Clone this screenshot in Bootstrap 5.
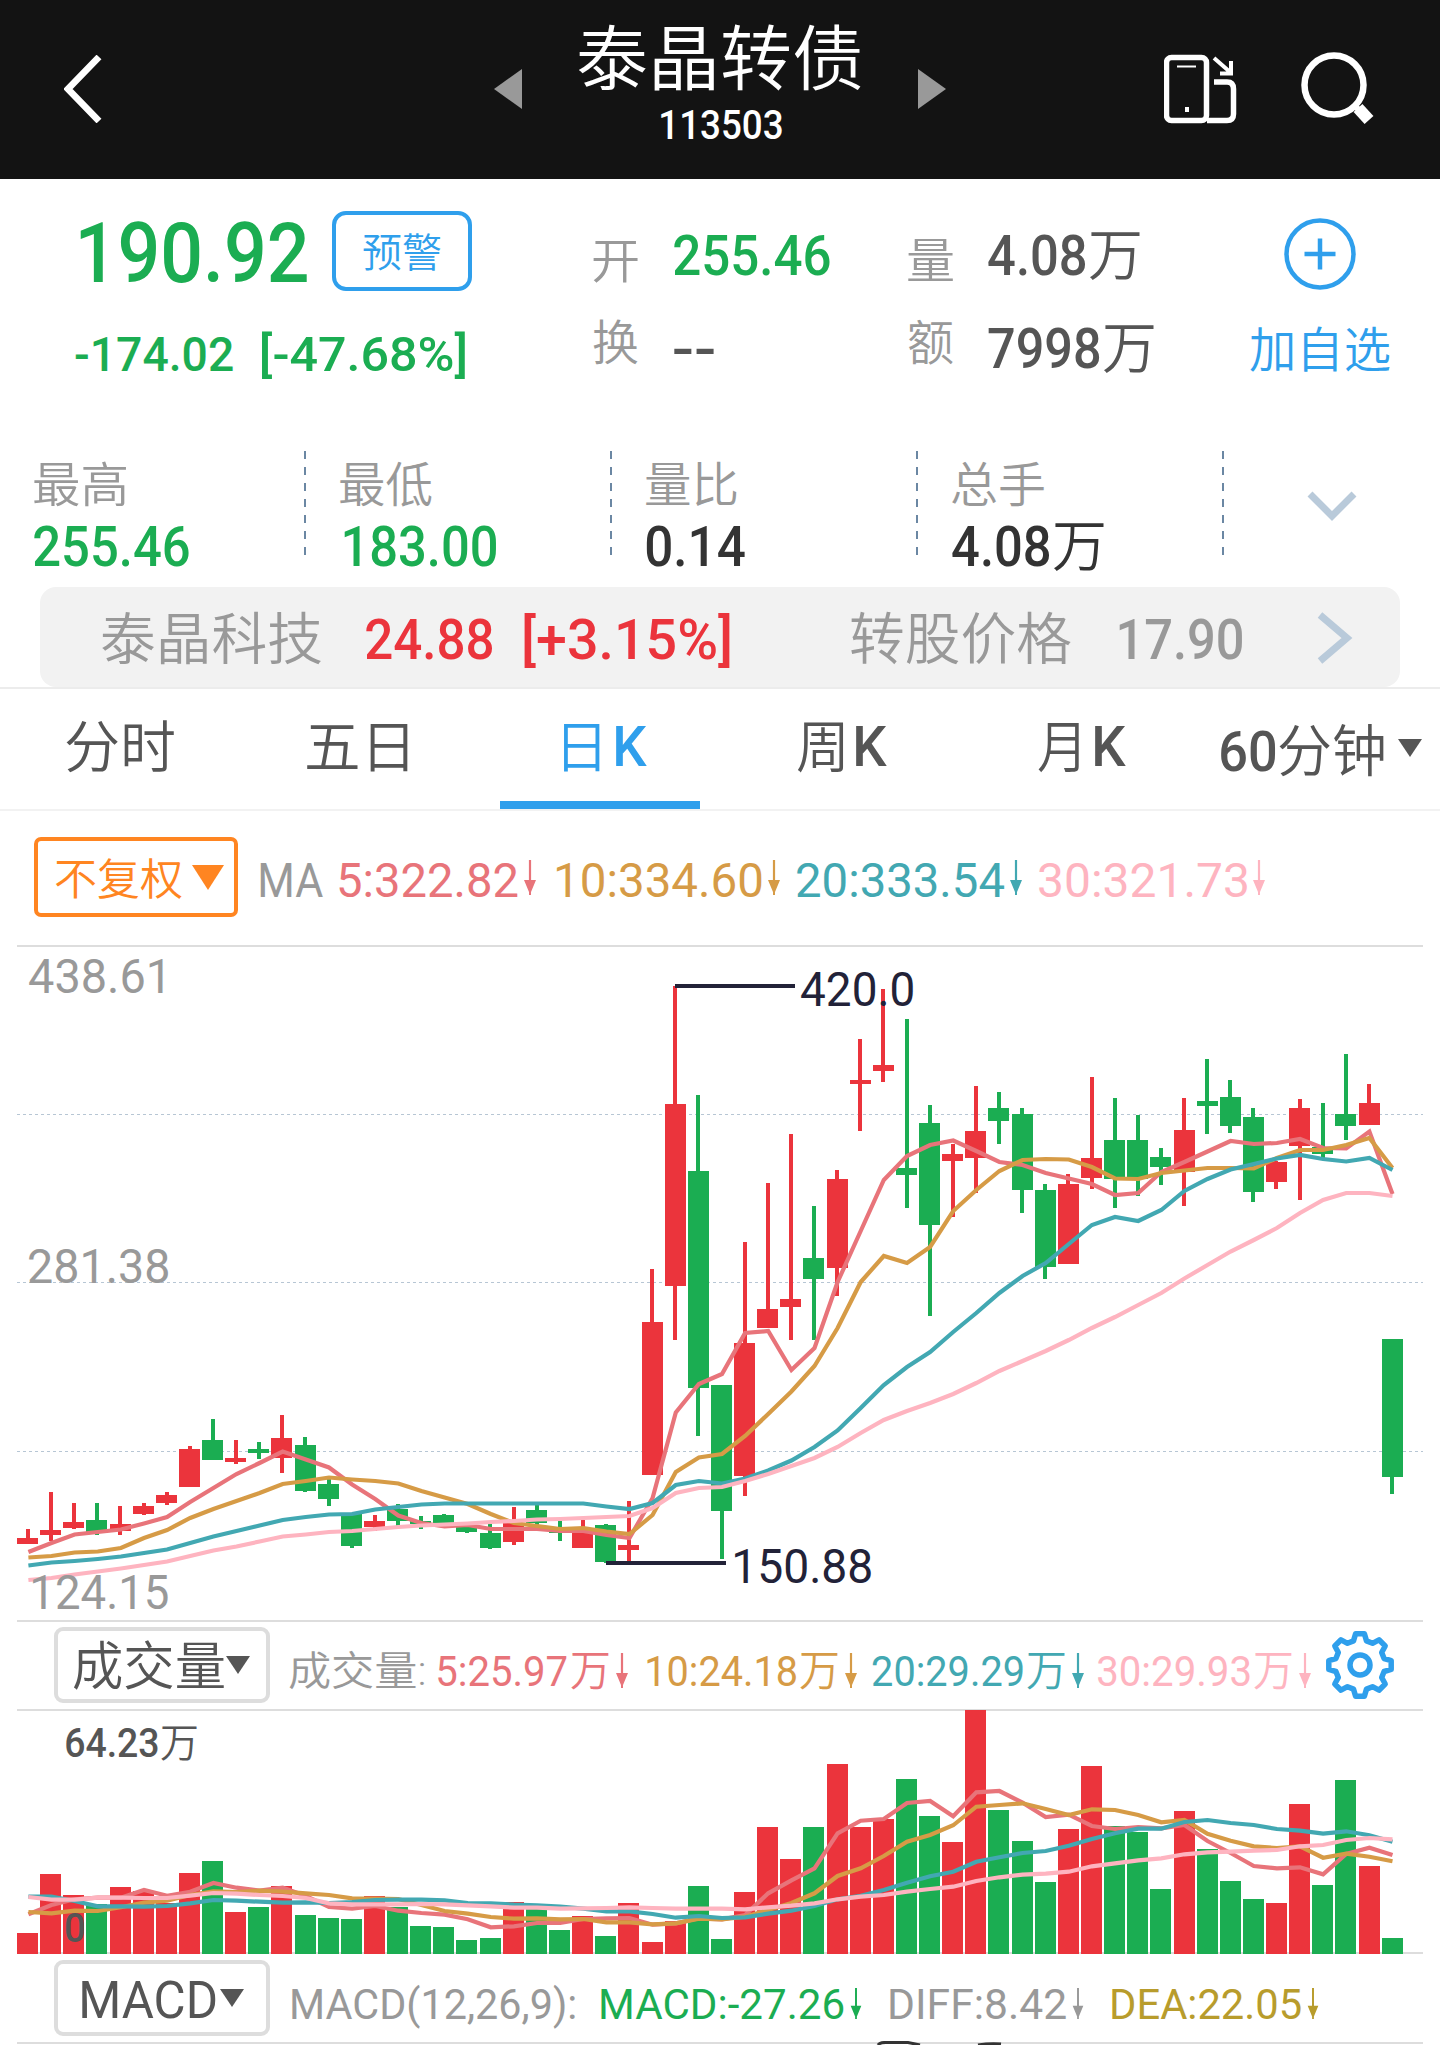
<!DOCTYPE html>
<html lang="zh-CN">
<head>
<meta charset="utf-8">
<meta name="viewport" content="width=device-width, initial-scale=1">
<title>泰晶转债 113503</title>
<link href="https://cdn.jsdelivr.net/npm/bootstrap@5.3.0/dist/css/bootstrap.min.css" rel="stylesheet">
<style>
  :root { --up:#eb343c; --down:#1bad52; --blue:#2f9fec; --orange:#ff8521; --c5:#e8747a; --c10:#d69b46; --c20:#42a8b2; --c30:#feb4c0; --ink:#555; --soft:#999; }
  body { font-family: Roboto, "Noto Sans CJK SC", sans-serif; font-weight: 500; color: var(--ink); background: #fff; overflow: hidden; }
  .screen { width: 1440px; height: 2045px; overflow: hidden; }
  .fit { display: block; white-space: nowrap; flex: none; }
  .fit > span { display: inline-block; transform-origin: 0 50%; }
  .zh { font-weight: 350; }
  svg { display: block; flex: none; }
  .up { color: var(--up); } .down { color: var(--down); } .soft { color: var(--soft); } .blue { color: var(--blue); } .dark { color: #333; }
  .c5 { color: var(--c5); } .c10 { color: var(--c10); } .c20 { color: var(--c20); } .c30 { color: var(--c30); } .dea { color: #b89c2c; }
  .f84 { font-size: 84px; line-height: 84px; } .f72 { font-size: 71px; line-height: 76px; }
  .f56 { font-size: 56px; line-height: 60px; } .f52 { font-size: 52px; line-height: 60px; }
  .f48 { font-size: 48px; line-height: 50px; } .f43 { font-size: 43px; line-height: 50px; } .f40 { font-size: 40px; line-height: 44px; }

  .topbar { height: 179px; background: #131313; color: #fff; display: grid; grid-template-columns: 430px 84px 340px 246px 136px 74px; padding-left: 64px; align-items: center; }
  .topbar > svg { margin-top: -1px; }
  .topbar .name { height: 179px; padding-top: 22px; }
  .topbar .code-no { margin: 6px 0 0 83px; }

  .quote { height: 272px; display: grid; grid-template-columns: 518px 81px 234px 80px 262px 140px; padding-left: 75px; }
  .price { padding: 30px 0 0 5px; } .price > .fit { padding-top: 3px; } .change { gap: 29px; margin-top: 34px; }
  .alert-btn { width: 140px; height: 80px; margin: -4px 0 0 25px; border: 4px solid var(--blue); border-radius: 14px; }
  .alert-btn .fit { margin-top: 7px; }
  .lab { padding-top: 58px; } .lab > :last-child { margin-top: 32px; }
  .val { padding-top: 47px; } .val > :last-child { margin-top: 33px; }
  .add { padding-top: 39px; } .add svg { margin-left: 34px; } .add .fit { margin-top: 36px; }

  .stats { height: 136px; display: grid; grid-template-columns: repeat(4, 306px) 1fr; padding-left: 34px; }
  .stat { height: 104px; margin-right: 34px; background: repeating-linear-gradient(#6b87a3 0 8px, transparent 8px 16px) right top / 2px 104px no-repeat; padding-top: 10px; }
  .stat > :last-child { margin-top: 6px; }
  .linked { width: 1360px; height: 100px; margin-left: 40px; padding: 5px 0 0 62px; background: #f2f2f2; border-radius: 16px; display: grid; grid-template-columns: 264px 158px 327px 268px 198px 36px; align-items: center; }
  .linked svg { margin-top: -4px; }
  .linked .zh { margin-top: 1px; }

  .periods { height: 124px; border-top: 2px solid #ececec; border-bottom: 2px solid #f2f2f2; display: grid; grid-template-columns: 241px 193px 297px 241px 183px 177px 30px; padding-left: 66px; }
  .periods .nav-link { padding: 0; height: 120px; color: #555; }
  .periods .fit { margin-top: 28px; } .periods .zh { margin-top: 29px; } .periods .nav-link.now { width: 200px; border-bottom: 8px solid var(--blue); padding-left: 64px; color: var(--blue); }
  .periods .later { margin-top: 33px; } .periods svg { margin-top: 50px; }

  .legend-ma { height: 134px; display: grid; grid-template-columns: 226px 79px 218px 240px 242px 230px; padding-left: 34px; align-items: center; font-weight: 450; }
  .legend-ma > .fit, .legend-ma .arrowed .fit { margin-top: 5px; }
  .adj { width: 204px; height: 80px; margin-bottom: 2px; border: 4px solid var(--orange); border-radius: 7px; color: var(--orange); padding-left: 17px; gap: 10px; }
  .adj .fit { margin-top: 6px; }
  .arrowed { gap: 6px; }
  .picker, .picker:hover { width: 216px; height: 76px; border: 4px solid #ddd; border-radius: 9px; padding-left: 15px; gap: 2px; color: #555; }
  .picker .fit { margin-top: 6px; }
  .picker.macd { padding-left: 24px; gap: 4px; }
  .legend-vol { height: 87px; display: grid; grid-template-columns: 235px 149px 209px 225px 226px 227px 70px; padding-left: 54px; align-items: center; font-weight: 450; }
  .legend-vol .picker { margin-top: -1px; } .legend-vol .arrowed { gap: 7px; padding-top: 10px; } .legend-vol > .fit { padding-top: 13px; }
  #gear { margin-top: -2px; }
  .legend-macd { height: 88px; display: grid; grid-template-columns: 238px 309px 289px 222px 210px; padding-left: 54px; align-items: start; font-weight: 450; }
  .legend-macd .picker { margin-top: 3px; } .legend-macd .arrowed, .legend-macd > .fit { margin-top: 22px; }
</style>
<script src="https://cdn.jsdelivr.net/npm/bootstrap@5.3.0/dist/js/bootstrap.bundle.min.js"></script>
</head>
<body>
<svg width="0" height="0" class="position-absolute">
  <symbol id="fall" viewBox="0 0 12 36"><path d="M6 0V22" stroke="currentColor" stroke-width="2.200"/><path d="M0 20H12L7 32V35H5V32Z" fill="currentColor"/></symbol>
</svg>
<main class="screen">
  <header class="topbar">
    <svg width="40" height="68" viewBox="0 0 40 68" fill="none" stroke="#fff" stroke-width="6.800"><path d="M35 2 4 34 35 66"/></svg>
    <svg width="28" height="40" viewBox="0 0 28 40"><path d="M28 0V40L0 20Z" fill="#999"/></svg>
    <div class="name">
      <h1 class="fit zh f72 m-0" data-w="283">泰晶转债</h1>
      <div class="fit f40 code-no" data-w="121">113503</div>
    </div>
    <svg width="28" height="40" viewBox="0 0 28 40"><path d="M0 0V40L28 20Z" fill="#999"/></svg>
    <svg width="74" height="70" viewBox="0 0 74 70" fill="none" stroke="#fff" stroke-width="5.500">
      <rect x="2.5" y="3.5" width="40" height="63" rx="5"/><path d="M13 12.500H32" stroke-width="2"/><path d="M23 53V58" stroke-width="4"/>
      <path d="M43 66.500H63Q69.500 66.500 69.500 60V35Q69.500 28 63 28H50"/><path d="M50 4 66 18M67 7V19.500H56" stroke-width="4"/>
    </svg>
    <svg width="74" height="74" viewBox="0 0 74 74" fill="none" stroke="#fff"><circle cx="34" cy="33" r="29.500" stroke-width="6.500"/><path d="M54 53 59 58" stroke-width="6"/><path d="M58 56 69 68" stroke-width="12"/></svg>
  </header>

  <section class="quote">
    <div>
      <div class="price d-flex align-items-center">
        <span class="fit f84 down" data-w="227">190.92</span>
        <button class="alert-btn btn p-0 d-flex align-items-center justify-content-center blue"><span class="fit zh f40" data-w="78">预警</span></button>
      </div>
      <div class="change d-flex down"><span class="fit f48" data-w="158">-174.02</span><span class="fit f48" data-w="203">[-47.68%]</span></div>
    </div>
    <div class="lab soft"><div class="fit zh f48" data-w="45">开</div><div class="fit zh f48" data-w="45">换</div></div>
    <div class="val"><div class="fit f56 down" data-w="156">255.46</div><div class="fit f56" data-w="40">--</div></div>
    <div class="lab soft"><div class="fit zh f48" data-w="45">量</div><div class="fit zh f48" data-w="45">额</div></div>
    <div class="val"><div class="d-flex"><span class="fit f56" data-w="98">4.08</span><span class="fit zh f56 ms-1" data-w="50">万</span></div><div class="d-flex"><span class="fit f56" data-w="112">7998</span><span class="fit zh f56 ms-1" data-w="50">万</span></div></div>
    <div class="add blue">
      <svg width="72" height="72" viewBox="0 0 72 72" fill="none" stroke="currentColor" stroke-width="4.500"><circle cx="36" cy="36" r="33.500"/><path d="M36 20.500V51.500M20.500 36H51.500"/></svg>
      <div class="fit zh f48" data-w="140">加自选</div>
    </div>
  </section>

  <section class="stats">
    <div class="stat"><div class="fit zh f48 soft" data-w="92">最高</div><div class="fit f56 down" data-w="155">255.46</div></div>
    <div class="stat"><div class="fit zh f48 soft" data-w="92">最低</div><div class="fit f56 down ms-1" data-w="152">183.00</div></div>
    <div class="stat"><div class="fit zh f48 soft" data-w="91">量比</div><div class="fit f56 dark" data-w="99">0.14</div></div>
    <div class="stat"><div class="fit zh f48 soft" data-w="92">总手</div><div class="d-flex dark"><span class="fit f56" data-w="98">4.08</span><span class="fit zh f56 ms-1" data-w="50">万</span></div></div>
    <svg class="mt-4 ms-4" width="94" height="60" viewBox="0 0 94 60"><path d="M28 19 50 41 72 19" fill="none" stroke="#b9cada" stroke-width="7"/></svg>
  </section>

  <section class="linked soft">
    <span class="fit zh f56" data-w="219">泰晶科技</span><span class="fit f56 up" data-w="127">24.88</span><span class="fit f56 up" data-w="206">[+3.15%]</span>
    <span class="fit zh f56" data-w="220">转股价格</span><span class="fit f56" data-w="123">17.90</span>
    <svg width="36" height="52" viewBox="0 0 36 52"><path d="M3 3 30 26 3 49" fill="none" stroke="#b9cada" stroke-width="7"/></svg>
  </section>

  <nav class="periods nav">
    <a class="nav-link"><span class="fit zh f56" data-w="108">分时</span></a>
    <a class="nav-link"><span class="fit zh f56" data-w="101">五日</span></a>
    <a class="nav-link now d-flex"><span class="fit zh f56" data-w="36">日</span><span class="fit f56 ms-3" data-w="31">K</span></a>
    <a class="nav-link d-flex gap-2"><span class="fit zh f56" data-w="47">周</span><span class="fit f56 ms-1" data-w="31">K</span></a>
    <a class="nav-link d-flex gap-3"><span class="fit zh f56" data-w="41">月</span><span class="fit f56" data-w="31">K</span></a>
    <a class="nav-link d-flex gap-1"><span class="fit f56 later" data-w="54">60</span><span class="fit zh f56 later" data-w="105">分钟</span></a>
    <svg width="24" height="18" viewBox="0 0 24 18"><path d="M0 0H24L12 18Z" fill="#555"/></svg>
  </nav>

  <section class="legend-ma">
    <button class="adj btn d-flex align-items-center py-0 pe-0"><span class="fit zh f43" data-w="127">不复权</span><svg width="32" height="25" viewBox="0 0 32 25"><path d="M0 0H32L16 25Z" fill="currentColor"/></svg></button>
    <span class="fit f48 soft" data-w="63">MA</span>
    <div class="arrowed d-flex align-items-center c5"><span class="fit f48" data-w="179">5:322.82</span><svg width="12" height="36"><use href="#fall"/></svg></div>
    <div class="arrowed d-flex align-items-center c10"><span class="fit f48" data-w="205">10:334.60</span><svg width="12" height="36"><use href="#fall"/></svg></div>
    <div class="arrowed d-flex align-items-center c20"><span class="fit f48" data-w="207">20:333.54</span><svg width="12" height="36"><use href="#fall"/></svg></div>
    <div class="arrowed d-flex align-items-center c30"><span class="fit f48" data-w="208">30:321.73</span><svg width="12" height="36"><use href="#fall"/></svg></div>
  </section>

  <svg id="kline" width="1440" height="677" viewBox="0 945 1440 677"></svg>

  <section class="legend-vol">
    <button class="picker btn d-flex align-items-center py-0 pe-0"><span class="fit zh f52" data-w="151">成交量</span><svg width="24" height="18" viewBox="0 0 24 18"><path d="M0 0H24L12 18Z" fill="#555"/></svg></button>
    <span class="fit zh f40 soft" data-w="135">成交量:</span>
    <div class="arrowed d-flex align-items-center c5"><div class="d-flex gap-1"><span class="fit f43" data-w="129">5:25.97</span><span class="fit f43 zh" data-w="38">万</span></div><svg width="12" height="36"><use href="#fall"/></svg></div>
    <div class="arrowed d-flex align-items-center c10"><div class="d-flex gap-1"><span class="fit f43" data-w="149">10:24.18</span><span class="fit f43 zh" data-w="38">万</span></div><svg width="12" height="36"><use href="#fall"/></svg></div>
    <div class="arrowed d-flex align-items-center c20"><div class="d-flex gap-1"><span class="fit f43" data-w="151">20:29.29</span><span class="fit f43 zh" data-w="38">万</span></div><svg width="12" height="36"><use href="#fall"/></svg></div>
    <div class="arrowed d-flex align-items-center c30"><div class="d-flex gap-1"><span class="fit f43" data-w="152">30:29.93</span><span class="fit f43 zh" data-w="38">万</span></div><svg width="12" height="36"><use href="#fall"/></svg></div>
    <svg id="gear" width="70" height="70" viewBox="-35 -35 70 70" fill="none" stroke="#2f9fec" stroke-width="5.500"><circle r="10"/></svg>
  </section>

  <svg id="volume" width="1440" height="248" viewBox="0 1709 1440 248"></svg>

  <section class="legend-macd position-relative">
    <button class="picker macd btn d-flex align-items-center py-0 pe-0"><span class="fit f52" data-w="134">MACD</span><svg width="24" height="18" viewBox="0 0 24 18"><path d="M0 0H24L12 18Z" fill="#555"/></svg></button>
    <span class="fit f43 soft fw-normal" data-w="283">MACD(12,26,9):</span>
    <div class="arrowed d-flex align-items-center down"><span class="fit f43" data-w="243">MACD:-27.26</span><svg width="12" height="32"><use href="#fall"/></svg></div>
    <div class="arrowed d-flex align-items-center soft"><span class="fit f43 fw-normal" data-w="176">DIFF:8.42</span><svg width="12" height="32"><use href="#fall"/></svg></div>
    <div class="arrowed d-flex align-items-center dea"><span class="fit f43" data-w="189">DEA:22.05</span><svg width="12" height="32"><use href="#fall"/></svg></div>
    <svg class="position-absolute bottom-0 start-0" width="1440" height="4"><path d="M17 2H1423" stroke="#ddd" stroke-width="2"/><path d="M878 4Q880 1 888 1.500H908L920 4M978 4Q990 2 1001 3" stroke="#333" stroke-width="3" fill="none"/></svg>
  </section>
</main>

<script>
const UP = '#eb343c', DOWN = '#1bad52', LINES = ['#e8747a', '#d69b46', '#42a8b2', '#feb4c0'];
const xAt = i => 28 + i * 23.12;
const bodyX = i => Math.round(28 + i * 23.13) - 11;
const rect = (x, y, w, h, c) => `<rect x="${x}" y="${y}" width="${w}" height="${h}" fill="${c}" shape-rendering="crispEdges"/>`;
const line = (pts, c) => `<polyline points="${pts.map((v, i) => (xAt(i) + .4).toFixed(1) + ',' + v.toFixed(1)).join(' ')}" fill="none" stroke="${c}" stroke-width="4.200"/>`;
const label = (x, y, w, s, c, t, weight = 450) => `<text class="ink" data-x="${x}" data-y="${y}" data-len="${w}" font-size="${s}" font-weight="${weight}" fill="${c}">${t}</text>`;

// direction, high, body top, body bottom, low
const candles = `R 1529 1538 1544 1544;R 1492 1530 1535 1541;R 1503 1522 1528 1529;G 1503 1520 1532 1535;R 1506 1524 1531 1535;R 1503 1506 1514 1515;R 1492 1495 1503 1505;R 1446 1449 1487 1487;G 1419 1440 1460 1460;R 1440 1458 1462 1464;G 1442 1449 1453 1459;R 1415 1438 1458 1473;G 1437 1445 1491 1492;G 1479 1484 1499 1506;G 1513 1513 1546 1548;R 1515 1521 1527 1531;G 1504 1509 1521 1526;G 1516 1521 1524 1529;G 1514 1515 1525 1526;G 1526 1526 1532 1533;G 1524 1533 1548 1549;R 1507 1523 1542 1545;G 1505 1510 1523 1525;G 1521 1530 1533 1541;R 1520 1530 1548 1548;G 1524 1525 1562 1563;R 1501 1545 1550 1562;R 1269 1322 1475 1475;R 986 1104 1286 1340;G 1095 1171 1388 1436;G 1385 1385 1511 1559;R 1242 1343 1476 1496;R 1183 1309 1328 1328;R 1134 1299 1307 1340;G 1206 1258 1279 1340;R 1170 1179 1268 1296;R 1039 1080 1084 1131;R 989 1065 1071 1082;G 1019 1168 1175 1208;G 1105 1123 1225 1316;R 1144 1154 1161 1217;R 1086 1131 1158 1193;G 1092 1108 1121 1144;G 1108 1114 1190 1213;G 1184 1190 1267 1279;R 1174 1184 1264 1264;R 1077 1158 1178 1189;G 1098 1140 1179 1208;G 1115 1140 1179 1196;G 1148 1157 1167 1185;R 1098 1130 1172 1206;G 1059 1101 1106 1134;G 1080 1097 1126 1133;G 1108 1117 1192 1202;R 1161 1162 1182 1189;R 1099 1108 1146 1200;G 1103 1147 1154 1158;G 1054 1114 1126 1140;R 1084 1103 1125 1125;G 1339 1339 1477 1494`.split(';').map(r => { const [d, ...v] = r.split(' '); return [d === 'R' ? UP : DOWN, ...v.map(Number)]; });
const ma = [
 [1552,1543,1534.5,1532,1529.5,1523.5,1517,1502,1488,1474,1463,1451.5,1459.5,1467.5,1484.5,1499,1515.5,1523,1526.5,1525,1529,1529,1529,1531,1531,1535,1538,1498,1412.5,1384,1374,1333,1331,1370,1348,1282,1231,1180,1156,1145,1140.5,1151,1162,1165,1173,1178.5,1184,1195,1193,1172,1162,1151.5,1141,1144,1143,1139,1148,1148.5,1131.5,1194],
 [1557.5,1556,1552.5,1551.5,1548,1538,1530,1518,1509,1501,1493,1484,1481,1477.5,1479.5,1481,1483.5,1491,1497.5,1504,1514,1523,1526,1529,1528,1531.5,1534,1515,1472,1457.5,1454,1436,1414,1391.5,1366,1328,1282,1256,1263,1247,1211,1190,1171,1160,1159,1159.5,1167,1178.5,1179,1173,1170.5,1168,1168,1168.5,1158,1150,1150,1145,1138,1168],
 [1565.5,1562.5,1561,1559,1556.5,1553,1549.5,1543,1536.5,1531,1525.5,1520,1517,1514.5,1514,1509.5,1507,1504.5,1503.5,1503.5,1503.5,1503.5,1503.5,1503.5,1503.5,1506.5,1509,1503,1485,1481,1483.5,1478.5,1470.5,1460.5,1447,1430.5,1408,1385,1367,1352,1332,1313,1293,1276,1263,1244,1225,1217,1221,1210,1191,1179,1169.5,1164,1158.5,1155,1159,1161.5,1158,1170],
 [1580,1578,1574.5,1571.5,1568.5,1565,1561.5,1556,1550.5,1546.5,1541.5,1536.5,1534.5,1532,1531,1529,1527,1525.5,1524.5,1523.5,1522,1521,1519.5,1519,1518,1517,1516,1508,1493,1488,1487,1481,1474,1466,1458,1447,1433,1420,1411,1403,1394,1383,1371,1361,1351,1340,1328,1317,1305,1293,1278.5,1265,1251.5,1240,1228,1213,1200,1193,1193,1196]];
let k = rect(17, 945, 1406, 2, '#ddd') + rect(17, 1620, 1406, 2, '#ddd');
for (const y of [1114.5, 1282.5, 1451.5]) k += `<path d="M17 ${y}H1423" stroke="#b7c6d4" stroke-width="1" stroke-dasharray="3 3"/>`;
candles.forEach(([c, h, t, b, l], i) => { k += rect(Math.round(xAt(i)) - 2, h, 4, l - h, c) + rect(bodyX(i), t, 21, b - t, c); });
ma.forEach((m, i) => k += line(m, LINES[i]));
k += rect(675, 984, 120, 4, '#222238') + rect(606, 1561, 120, 4, '#222238');
k += label(29, 993, 134, 49, '#999', '438.61') + label(29, 1283, 139, 49, '#999', '281.38') + label(33, 1609, 135, 49, '#999', '124.15');
k += label(801, 1006, 112, 49, '#222238', '420.0') + label(735, 1583, 136, 49, '#222238', '150.88');
document.getElementById('kline').innerHTML = k;

const tops = [1933,1874,1895,1904,1887,1891,1903,1873,1861,1912,1907,1886,1915,1918,1919,1896,1907,1926,1927,1940,1938,1902,1908,1930,1916,1936,1903,1942,1921,1886,1939,1892,1827,1859,1827,1764,1827,1819,1779,1816,1842,1710,1810,1841,1882,1829,1766,1826,1832,1889,1811,1849,1881,1899,1903,1804,1885,1780,1866,1938];
const vma = [
 [913,885,868,863,863,840,857,845,819,833,842,833,858,891,896,888,902,909,914,928,952,949,939,939,927,925,924,944,940,925,928,915,850,811,775,670,632,627,579,573,619,547,543,578,621,614,648,657,651,655,645,693,729,768,775,772,793,732,713,735],
 [906,910,902,903,892,878,872,855,844,846,842,845,850,855,865,866,867,885,903,911,921,926,925,928,927,937,937,943,940,926,928,920,900,879,850,798,775,738,695,675,646,590,585,580,597,615,598,600,615,637,630,671,692,709,714,709,743,731,740,754],
 [860,860,873,889,889,890,888,880,870,872,875,878,877,879,876,870,869,869,871,879,880,884,886,890,896,904,904,912,923,918,924,922,911,902,888,868,857,840,818,799,785,755,742,729,723,707,687,670,656,656,636,630,639,645,657,662,671,664,676,695],
 [861,869,869,863,863,864,864,857,849,851,855,858,864,880,883,883,883,882,883,886,889,893,893,896,895,894,892,894,896,896,896,898,892,887,880,868,860,855,845,837,830,813,802,794,791,785,769,760,751,745,733,727,725,722,720,709,705,690,684,688]];
let v = rect(17, 1709, 1406, 2, '#ddd') + rect(17, 1952, 1406, 2, '#ddd');
tops.forEach((t, i) => v += rect(bodyX(i), t, 21, 1954 - t, candles[i][0]));
v += label(66, 1942, 18, 40, '#555', '0', 500);
vma.forEach((m, i) => v += line(m.map(n => 1610 + n / 3), LINES[i]));
v += label(66, 1757, 92, 40, '#555', '64.23', 500) + label(161, 1757, 36, 40, '#555', '万', 350);
document.getElementById('volume').innerHTML = v;

// gear outline with eight teeth
const gp = [];
for (let n = 0; n < 8; n++) for (const [da, r] of [[-15, 25], [-8, 31.500], [8, 31.500], [15, 25]]) {
  const a = (n * 45 - 90 + da) * Math.PI / 180; gp.push((r * Math.cos(a)).toFixed(1) + ' ' + (r * Math.sin(a)).toFixed(1));
}
document.getElementById('gear').insertAdjacentHTML('beforeend', `<path d="M${gp.join('L')}Z" stroke-linejoin="round"/>`);

// condensed lettering: scale every label horizontally to its own width
const ctx = document.createElement('canvas').getContext('2d');
const measure = el => { const s = getComputedStyle(el); ctx.font = `${s.fontWeight} ${s.fontSize} ${s.fontFamily}`; const m = ctx.measureText(el.textContent); return [m.actualBoundingBoxLeft, m.actualBoundingBoxLeft + m.actualBoundingBoxRight]; };
document.querySelectorAll('.fit').forEach(el => {
  const [left, ink] = measure(el), w = +el.dataset.w, q = w / ink;
  const inner = document.createElement('span'); inner.append(...el.childNodes); el.append(inner);
  el.style.width = w + 'px'; inner.style.transform = `matrix(${q},0,0,1,${left * q},0)`;
});
document.querySelectorAll('.ink').forEach(el => {
  const [left, ink] = measure(el), q = el.dataset.len / ink;
  el.setAttribute('transform', `matrix(${q} 0 0 1 ${+el.dataset.x + left * q} ${el.dataset.y})`);
});
</script>
</body>
</html>
